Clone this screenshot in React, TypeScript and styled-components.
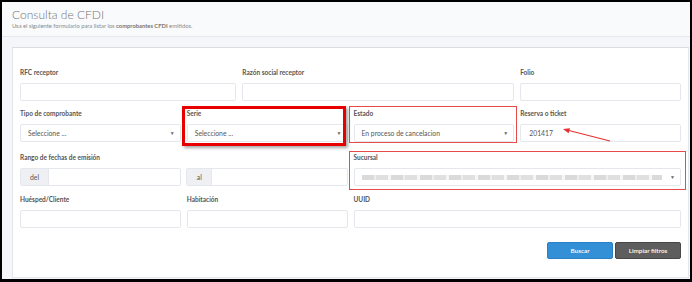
import React from 'react';
import styled, { createGlobalStyle } from 'styled-components';

const GlobalStyle = createGlobalStyle`
  html, body {
    margin: 0;
    padding: 0;
    background: #000;
  }
  body {
    font-family: Lato, "Liberation Sans", sans-serif;
  }
`;

const Frame = styled.div`
  width: 692px;
  height: 282px;
  box-sizing: border-box;
  padding: 2px 2px 3px 2px;
  background: #000;
`;

const Page = styled.div`
  height: 100%;
  background: #f4f6f9;
  display: flex;
  flex-direction: column;
  overflow: hidden;
`;

const PageHeader = styled.div`
  height: 35px;
  box-sizing: border-box;
  padding: 5px 10px 0;
  background: #f9fafc;
  border-bottom: 1px solid #e5e9ee;
`;

const Title = styled.h1`
  margin: 0;
  font-size: 12px;
  line-height: 15px;
  font-weight: 300;
  color: #777;
`;

const Subtitle = styled.p`
  margin: 0;
  font-size: 5.8px;
  line-height: 8px;
  color: #8a8a8a;

  b {
    font-weight: 700;
    color: #777;
  }
`;

const Content = styled.div`
  flex: 1;
  padding: 10px 1px 1px 10px;
  display: flex;
`;

const Card = styled.div`
  flex: 1;
  background: #fff;
  border: 1px solid #e3e7ec;
  border-top-color: #d7dde3;
  padding: 20px 4px 0;
`;

const Row = styled.div<{ $mb?: number }>`
  display: flex;
  margin-bottom: ${({ $mb }) => $mb ?? 8}px;
`;

const Col = styled.div<{ $span: number }>`
  position: relative;
  box-sizing: border-box;
  width: ${({ $span }) => ($span / 12) * 100}%;
  padding: 0 3px;
`;

const Label = styled.label`
  display: block;
  font-size: 6.5px;
  line-height: 10px;
  font-weight: 700;
  color: #555;
  margin-bottom: 5px;
`;

const Input = styled.div`
  height: 18px;
  box-sizing: border-box;
  border: 1px solid #e4e8ec;
  border-radius: 2px;
  background: #fff;
  display: flex;
  align-items: center;
  padding: 0 8px;
  font-size: 6.8px;
  color: #555;
`;

const Select = styled(Input)`
  justify-content: space-between;
  padding-right: 5px;
  padding-left: 7px;
`;

const Caret = styled.span`
  font-size: 5px;
  color: #666;
`;

const Pair = styled.div`
  display: grid;
  grid-template-columns: 1fr 1fr;
  gap: 5px;
`;

const Group = styled.div`
  display: flex;
  height: 18px;
  box-sizing: border-box;
  border: 1px solid #e4e8ec;
  border-radius: 2px;
  overflow: hidden;
`;

const Addon = styled.span<{ $w: number }>`
  width: ${({ $w }) => $w}px;
  background: #eef0f3;
  display: flex;
  align-items: center;
  justify-content: center;
  font-size: 6.8px;
  color: #555;
  border-right: 1px solid #e4e8ec;
`;

const Masked = styled.span`
  flex: 1;
  height: 5px;
  margin-right: 8px;
  background: repeating-linear-gradient(
    90deg,
    #dadada 0 12px,
    #eeeeee 12px 14px,
    #e0e0e0 14px 26px,
    #f6f6f6 26px 29px
  );
  filter: blur(0.5px);
`;

const Highlight = styled.span<{ $w: number; $t: number; $l: number; $r: number; $b: number }>`
  position: absolute;
  top: ${({ $t }) => $t}px;
  left: ${({ $l }) => $l}px;
  right: ${({ $r }) => $r}px;
  bottom: ${({ $b }) => $b}px;
  border: ${({ $w }) => $w}px solid ${({ $w }) => ($w > 2 ? '#e80000' : '#e84a4a')};
  box-shadow: ${({ $w }) => ($w > 2 ? '2px 2px 3px rgba(0,0,0,0.35)' : 'none')};
  pointer-events: none;
`;

const Arrow = styled.svg`
  position: absolute;
  left: 46px;
  top: 18px;
  overflow: visible;
`;

const Actions = styled.div`
  display: flex;
  justify-content: flex-end;
  gap: 2px;
  padding: 0 3px;
  margin-top: 14px;
`;

const Button = styled.button<{ $variant: 'primary' | 'default' }>`
  width: 66px;
  height: 17px;
  border-radius: 2px;
  border: 1px solid ${({ $variant }) => ($variant === 'primary' ? '#2a80c4' : '#484848')};
  background: ${({ $variant }) => ($variant === 'primary' ? '#3390d6' : '#5e5e5e')};
  color: #fff;
  font-family: Lato, "Liberation Sans", sans-serif;
  font-size: 6.4px;
  font-weight: 600;
  padding: 0;
`;

const App: React.FC = () => {
  return (
    <Frame>
      <GlobalStyle />
      <Page>
        <PageHeader>
          <Title>Consulta de CFDI</Title>
          <Subtitle>
            Usa el siguiente formulario para listar los <b>comprobantes CFDI</b> emitidos.
          </Subtitle>
        </PageHeader>
        <Content>
          <Card>
            <Row>
              <Col $span={4}>
                <Label>RFC receptor</Label>
                <Input />
              </Col>
              <Col $span={5}>
                <Label>Razón social receptor</Label>
                <Input />
              </Col>
              <Col $span={3}>
                <Label>Folio</Label>
                <Input />
              </Col>
            </Row>

            <Row $mb={11}>
              <Col $span={3}>
                <Label>Tipo de comprobante</Label>
                <Select>
                  Seleccione ...
                  <Caret>▼</Caret>
                </Select>
              </Col>
              <Col $span={3}>
                <Label>Serie</Label>
                <Select>
                  Seleccione ...
                  <Caret>▼</Caret>
                </Select>
                <Highlight $w={3} $t={-3} $l={-2} $r={5} $b={-4} />
              </Col>
              <Col $span={3}>
                <Label>Estado</Label>
                <Select>
                  En proceso de cancelacion
                  <Caret>▼</Caret>
                </Select>
                <Highlight $w={1.5} $t={-3} $l={-2} $r={0} $b={-1} />
              </Col>
              <Col $span={3}>
                <Label>Reserva o ticket</Label>
                <Input>201417</Input>
                <Arrow width="48" height="14" viewBox="0 0 48 14">
                  <line x1="47" y1="14" x2="4" y2="3" stroke="#e53030" strokeWidth="1.1" />
                  <polygon points="0,2 7,1.2 5.6,6.2" fill="#e53030" />
                </Arrow>
              </Col>
            </Row>

            <Row $mb={9}>
              <Col $span={6}>
                <Label>Rango de fechas de emisión</Label>
                <Pair>
                  <Group>
                    <Addon $w={27}>del</Addon>
                  </Group>
                  <Group>
                    <Addon $w={24}>al</Addon>
                  </Group>
                </Pair>
              </Col>
              <Col $span={6}>
                <Label>Sucursal</Label>
                <Select>
                  <Masked />
                  <Caret>▼</Caret>
                </Select>
                <Highlight $w={1} $t={-2} $l={-2} $r={-2} $b={-4} />
              </Col>
            </Row>

            <Row $mb={0}>
              <Col $span={3}>
                <Label>Huésped/Cliente</Label>
                <Input />
              </Col>
              <Col $span={3}>
                <Label>Habitación</Label>
                <Input />
              </Col>
              <Col $span={6}>
                <Label>UUID</Label>
                <Input />
              </Col>
            </Row>

            <Actions>
              <Button $variant="primary">Buscar</Button>
              <Button $variant="default">Limpiar filtros</Button>
            </Actions>
          </Card>
        </Content>
      </Page>
    </Frame>
  );
};

export default App;
